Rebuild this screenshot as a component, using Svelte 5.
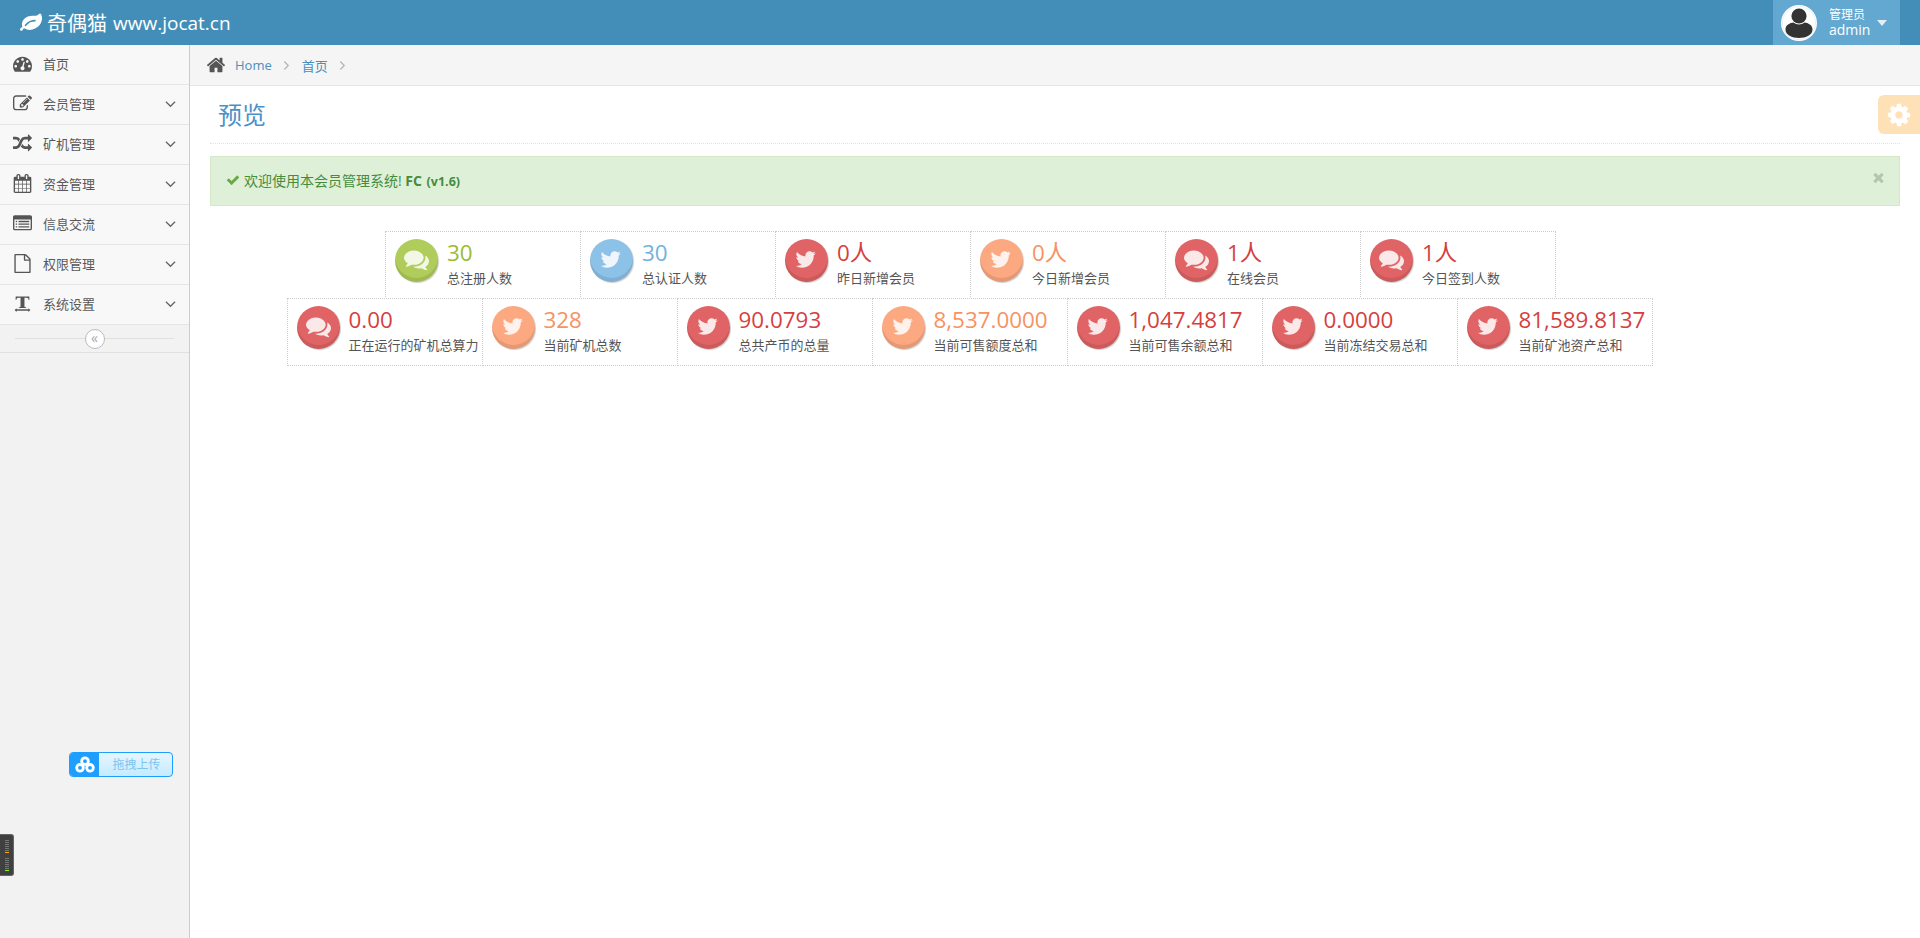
<script>
  const icons = {
    twitter: "M1620 408q-67 98-162 167 1 14 1 42 0 130-38 259.5t-115.5 248.5-184.5 210.5-258 146-323 54.5q-271 0-496-145 35 4 76 4 225 0 401-138-105-2-188-64.5t-114-159.5q33 5 61 5 43 0 85-11-112-23-185.5-111.5t-73.5-205.5v-4q68 38 146 41-66-44-105-115t-39-154q0-88 44-163 121 149 294.5 238.5t371.5 99.5q-8-38-8-74 0-134 94.5-228.5t228.5-94.5q140 0 236 102 109-21 200-76-35 110-132 166 85-9 170-46z",
    comments: "M1408 768q0 139-94 257t-256.5 186.5-353.5 68.5q-86 0-176-16-124 88-278 128-36 9-86 16h-3q-11 0-20.5-8t-11.5-21q-1-3-1-6.5t.5-6.5 2-6l2.5-5 3.5-5.5 4-5 4.5-5 4-4.5q5-6 23-25t26-29.5 22.5-29 25-38.5 20.5-44q-124-72-195-177t-71-224q0-139 94-257t256.5-186.5 353.5-68.5 353.5 68.5 256.5 186.5 94 257zm384 256q0 120-71 224.5t-195 176.5q10 24 20.5 44t25 38.5 22.5 29 26 29.5 23 25q1 1 4 4.5t4.5 5 4 5 3.5 5.5l2.5 5 2 6 .5 6.5-1 6.5q-3 14-13 22t-22 7q-50-7-86-16-154-40-278-128-90 16-176 16-271 0-472-132 58 4 88 4 161 0 309-45t264-129q125-92 192-212t67-254q0-77-23-152 129 71 204 178t75 230z",
    home: "M1472 992v480q0 26-19 45t-45 19h-384v-384h-256v384h-384q-26 0-45-19t-19-45v-480q0-1 .5-3t.5-3l575-474 575 474q1 2 1 6zm223-69l-62 74q-8 9-21 11h-3q-13 0-21-7l-692-577-692 577q-12 8-24 7-13-2-21-11l-62-74q-8-10-7-23.5t11-21.5l719-599q32-26 76-26t76 26l244 204v-195q0-14 9-23t23-9h192q14 0 23 9t9 23v408l219 182q10 8 11 21.5t-7 23.5z",
    cog: "M1152 896q0-106-75-181t-181-75-181 75-75 181 75 181 181 75 181-75 75-181zm512-109v222q0 12-8 23t-20 13l-185 28q-19 54-39 91 35 50 107 138 10 12 10 25t-9 23q-27 37-99 108t-94 71q-12 0-26-9l-138-108q-44 23-91 38-16 136-29 186-7 28-36 28h-222q-14 0-24.5-8.5t-11.5-21.5l-28-184q-49-16-90-37l-141 107q-10 9-25 9-14 0-25-11-126-114-165-168-7-10-7-23 0-12 8-23 15-21 51-66.5t54-70.5q-27-50-41-99l-183-27q-13-2-21-12.5t-8-23.5v-222q0-12 8-23t19-13l186-28q14-46 39-92-40-57-107-138-10-12-10-24 0-10 9-23 26-36 98.5-107.5t94.5-71.5q13 0 26 10l138 107q44-23 91-38 16-136 29-186 7-28 36-28h222q14 0 24.5 8.5t11.5 21.5l28 184q49 16 90 37l142-107q9-9 24-9 13 0 25 10 129 119 165 170 7 8 7 22 0 12-8 23-15 21-51 66.5t-54 70.5q26 50 41 98l183 28q13 2 21 12.5t8 23.5z",
    check: "M1671 566q0 40-28 68l-724 724-136 136q-28 28-68 28t-68-28l-136-136-362-362q-28-28-28-68t28-68l136-136q28-28 68-28t68 28l294 295 656-657q28-28 68-28t68 28l136 136q28 28 28 68z",
    times: "M1490 1322q0 40-28 68l-136 136q-28 28-68 28t-68-28l-294-294-294 294q-28 28-68 28t-68-28l-136-136q-28-28-28-68t28-68l294-294-294-294q-28-28-28-68t28-68l136-136q28-28 68-28t68 28l294 294 294-294q28-28 68-28t68 28l136 136q28 28 28 68t-28 68l-294 294 294 294q28 28 28 68z",
    leaf: "M1280 704q0-26-19-45t-45-19q-172 0-318 49.5t-259.5 134-235.5 219.5q-19 21-19 45 0 26 19 45t45 19q24 0 45-19 27-24 74-71t67-66q137-124 268.5-176t313.5-52q26 0 45-19t19-45zm512-198q0 95-20 193-46 224-184.5 383t-357.5 268q-214 108-438 108-148 0-286-47-15-5-88-42t-96-37q-16 0-39.5 32t-45 70-52.5 70-60 32q-30 0-51-11t-31-24-27-42q-2-4-6-11t-5.5-10-3-9.5-1.5-13.5q0-35 31-73.5t68-65.5 68-56 31-48q0-4-14-38t-16-44q-9-51-9-104 0-115 43.5-220t119-184.5 170.5-139 204-95.5q55-18 145-25.5t179.5-9 178.5-6 163.5-24 113.5-56.5l29.5-29.5 29.5-28 27-20 36.5-16 43.5-4.5q39 0 70.5 46t47.5 112 24 124 8 96z",
    random: "M666 481q-60 92-137 273-22-45-37-72.5t-40.5-63.5-51-56.5-63-35-81.5-14.5h-224q-14 0-23-9t-9-23v-192q0-14 9-23t23-9h224q250 0 410 225zm1126 799q0 14-9 23l-320 320q-9 9-23 9-13 0-22.5-9.5t-9.5-22.5v-192q-32 0-85 .5t-81 1-73-1-71-5-64-10.5-63-18.5-58-28.5-59-40-55-53.5-56-69.5q59-93 136-273 22 45 37 72.5t40.5 63.5 51 56.5 63 35 81.5 14.5h256v-192q0-14 9-23t23-9q12 0 24 10l319 319q9 9 9 23zm0-896q0 14-9 23l-320 320q-9 9-23 9-13 0-22.5-9.5t-9.5-22.5v-192h-256q-48 0-87 15t-69 45-51 61.5-45 77.5q-32 62-78 171-29 66-49.5 111t-54 105-64 100-74 83-90 68.5-106.5 42-128 16.5h-224q-14 0-23-9t-9-23v-192q0-14 9-23t23-9h224q48 0 87-15t69-45 51-61.5 45-77.5q32-62 78-171 29-66 49.5-111t54-105 64-100 74-83 90-68.5 106.5-42 128-16.5h256v-192q0-14 9-23t23-9q12 0 24 10l319 319q9 9 9 23z",
    calendar: "M192 1664h288v-288h-288v288zm352 0h320v-288h-320v288zm-352-352h288v-320h-288v320zm352 0h320v-320h-320v320zm-352-384h288v-288h-288v288zm736 736h320v-288h-320v288zm-384-736h320v-288h-320v288zm768 736h288v-288h-288v288zm-384-352h320v-320h-320v320zm-352-864v-288q0-13-9.5-22.5t-22.5-9.5h-64q-13 0-22.5 9.5t-9.5 22.5v288q0 13 9.5 22.5t22.5 9.5h64q13 0 22.5-9.5t9.5-22.5zm736 864h288v-320h-288v320zm-384-384h320v-288h-320v288zm384 0h288v-288h-288v288zm32-480v-288q0-13-9.5-22.5t-22.5-9.5h-64q-13 0-22.5 9.5t-9.5 22.5v288q0 13 9.5 22.5t22.5 9.5h64q13 0 22.5-9.5t9.5-22.5zm384-64v1280q0 52-38 90t-90 38h-1408q-52 0-90-38t-38-90v-1280q0-52 38-90t90-38h128v-96q0-66 47-113t113-47h64q66 0 113 47t47 113v96h384v-96q0-66 47-113t113-47h64q66 0 113 47t47 113v96h128q52 0 90 38t38 90z",
    edit: "M888 1184l116-116-152-152-116 116v56h96v96h56zm440-720q-16-16-33 1l-350 350q-17 17-1 33t33-1l350-350q17-17 1-33zm80 594v190q0 119-84.5 203.5t-203.5 84.5h-832q-119 0-203.5-84.5t-84.5-203.5v-832q0-119 84.5-203.5t203.5-84.5h832q63 0 117 25 15 7 18 23 3 17-9 29l-49 49q-14 14-32 8-23-6-45-6h-832q-66 0-113 47t-47 113v832q0 66 47 113t113 47h832q66 0 113-47t47-113v-126q0-13 9-22l64-64q15-15 35-7t20 29zm-96-738l288 288-672 672h-288v-288zm444 132l-92 92-288-288 92-92q28-28 68-28t68 28l152 152q28 28 28 68t-28 68z",
    listalt: "M384 1184v64q0 13-9.5 22.5t-22.5 9.5h-64q-13 0-22.5-9.5t-9.5-22.5v-64q0-13 9.5-22.5t22.5-9.5h64q13 0 22.5 9.5t9.5 22.5zm0-256v64q0 13-9.5 22.5t-22.5 9.5h-64q-13 0-22.5-9.5t-9.5-22.5v-64q0-13 9.5-22.5t22.5-9.5h64q13 0 22.5 9.5t9.5 22.5zm0-256v64q0 13-9.5 22.5t-22.5 9.5h-64q-13 0-22.5-9.5t-9.5-22.5v-64q0-13 9.5-22.5t22.5-9.5h64q13 0 22.5 9.5t9.5 22.5zm1152 512v64q0 13-9.5 22.5t-22.5 9.5h-960q-13 0-22.5-9.5t-9.5-22.5v-64q0-13 9.5-22.5t22.5-9.5h960q13 0 22.5 9.5t9.5 22.5zm0-256v64q0 13-9.5 22.5t-22.5 9.5h-960q-13 0-22.5-9.5t-9.5-22.5v-64q0-13 9.5-22.5t22.5-9.5h960q13 0 22.5 9.5t9.5 22.5zm0-256v64q0 13-9.5 22.5t-22.5 9.5h-960q-13 0-22.5-9.5t-9.5-22.5v-64q0-13 9.5-22.5t22.5-9.5h960q13 0 22.5 9.5t9.5 22.5zm128 704v-832q0-13-9.5-22.5t-22.5-9.5h-1472q-13 0-22.5 9.5t-9.5 22.5v832q0 13 9.5 22.5t22.5 9.5h1472q13 0 22.5-9.5t9.5-22.5zm128-1088v1088q0 66-47 113t-113 47h-1472q-66 0-113-47t-47-113v-1088q0-66 47-113t113-47h1472q66 0 113 47t47 113z",
    file: "M1596 380q28 28 48 76t20 88v1152q0 40-28 68t-68 28h-1344q-40 0-68-28t-28-68v-1600q0-40 28-68t68-28h896q40 0 88 20t76 48zm-444-244v376h376q-10-29-22-41l-313-313q-12-12-41-22zm384 1528v-1024h-416q-40 0-68-28t-28-68v-416h-768v1536h1280z",
    dashboard: "M384 1152q0-53-37.5-90.5t-90.5-37.5-90.5 37.5-37.5 90.5 37.5 90.5 90.5 37.5 90.5-37.5 37.5-90.5zm192-448q0-53-37.5-90.5t-90.5-37.5-90.5 37.5-37.5 90.5 37.5 90.5 90.5 37.5 90.5-37.5 37.5-90.5zm428 481l101-382q6-26-7.5-48.5t-38.5-29.5-48 6.5-30 39.5l-101 382q-60 5-107 43.5t-63 98.5q-20 77 20 146t117 89 146-20 89-117q16-60-6-117t-72-91zm660-33q0-53-37.5-90.5t-90.5-37.5-90.5 37.5-37.5 90.5 37.5 90.5 90.5 37.5 90.5-37.5 37.5-90.5zm-640-640q0-53-37.5-90.5t-90.5-37.5-90.5 37.5-37.5 90.5 37.5 90.5 90.5 37.5 90.5-37.5 37.5-90.5zm448 192q0-53-37.5-90.5t-90.5-37.5-90.5 37.5-37.5 90.5 37.5 90.5 90.5 37.5 90.5-37.5 37.5-90.5zm320 448q0 261-141 483-19 29-54 29h-1402q-35 0-54-29-141-221-141-483 0-182 71-348t191-286 286-191 348-71 348 71 286 191 191 286 71 348z",
    textwidth: "M250 230h1292v330h-60q-20-130-60-170t-150-40h-190v800q0 60 30 75t130 25v60h-692v-60q100-10 130-25t30-75v-800h-190q-110 0-150 40t-60 170h-60zM340 1450h1112v-110l190 180-190 180v-110h-1112v110l-190-180 190-180z"
  };

  const menu = [
    { label: "首页", icon: "dashboard" },
    { label: "会员管理", icon: "edit", arrow: true },
    { label: "矿机管理", icon: "random", arrow: true },
    { label: "资金管理", icon: "calendar", arrow: true },
    { label: "信息交流", icon: "listalt", arrow: true },
    { label: "权限管理", icon: "file", arrow: true },
    { label: "系统设置", icon: "textwidth", arrow: true }
  ];

  const rowOne = [
    { value: "30", label: "总注册人数", color: "green", icon: "comments" },
    { value: "30", label: "总认证人数", color: "blue", icon: "twitter" },
    { value: "0人", label: "昨日新增会员", color: "red", icon: "twitter" },
    { value: "0人", label: "今日新增会员", color: "orange", icon: "twitter" },
    { value: "1人", label: "在线会员", color: "red", icon: "comments" },
    { value: "1人", label: "今日签到人数", color: "red", icon: "comments" }
  ];

  const rowTwo = [
    { value: "0.00", label: "正在运行的矿机总算力", color: "red", icon: "comments" },
    { value: "328", label: "当前矿机总数", color: "orange", icon: "twitter" },
    { value: "90.0793", label: "总共产币的总量", color: "red", icon: "twitter" },
    { value: "8,537.0000", label: "当前可售额度总和", color: "orange", icon: "twitter" },
    { value: "1,047.4817", label: "当前可售余额总和", color: "red", icon: "twitter" },
    { value: "0.0000", label: "当前冻结交易总和", color: "red", icon: "twitter" },
    { value: "81,589.8137", label: "当前矿池资产总和", color: "red", icon: "twitter" }
  ];
</script>

{#snippet fa(name, cls)}
  <svg class={cls} viewBox="0 0 1792 1792" fill="currentColor" aria-hidden="true"><path d={icons[name]} /></svg>
{/snippet}

{#snippet crumbSep()}
  <svg class="sep" viewBox="0 0 8 12" aria-hidden="true"><path d="M1.5 1.5L6 6l-4.5 4.5" fill="none" stroke="#b2b6bf" stroke-width="1.5" /></svg>
{/snippet}

{#snippet infobox(item)}
  <div class="infobox {item.color}">
    <div class="circle">
      {@render fa(item.icon, item.icon === "comments" ? "glyph-comments" : "glyph-twitter")}
    </div>
    <div class="info">
      <div class="num">{item.value}</div>
      <div class="cap">{item.label}</div>
    </div>
  </div>
{/snippet}

<div class="page">
  <header class="navbar">
    <div class="brand">
      {@render fa("leaf", "brand-icon")}
      <span class="brand-cn">奇偶猫</span>
      <span class="brand-url">www.jocat.cn</span>
    </div>
    <div class="user">
      <svg class="avatar" viewBox="0 0 36 36" aria-hidden="true">
        <circle cx="18" cy="18" r="18" fill="#fff" />
        <circle cx="18" cy="18" r="16.6" fill="#fff" stroke="#dfe6ea" stroke-width="0.6" />
        <circle cx="18" cy="11" r="7.6" fill="#333" />
        <path d="M4.5 24.5C4.5 20 9 18 12.5 17.6c3 2.6 8 2.6 11 0C27 18 31.5 20 31.5 24.5 31.5 30 25 33 18 33S4.5 30 4.5 24.5z" fill="#333" />
      </svg>
      <div class="user-text">
        <div>管理员</div>
        <div class="user-name">admin</div>
      </div>
      <span class="caret"></span>
    </div>
  </header>

  <div class="body">
    <aside class="sidebar">
      <ul class="nav">
        {#each menu as item}
          <li>
            <span class="nav-icon">{@render fa(item.icon, "nav-svg")}</span>
            <span class="nav-label">{item.label}</span>
            {#if item.arrow}
              <svg class="chev" viewBox="0 0 12 8" aria-hidden="true"><path d="M1 1.5l5 5 5-5" fill="none" stroke="#666" stroke-width="1.4" /></svg>
            {/if}
          </li>
        {/each}
      </ul>
      <div class="collapse">
        <span class="collapse-btn">«</span>
      </div>
    </aside>

    <main class="main">
      <div class="breadcrumbs">
        {@render fa("home", "home-icon")}
        <span class="crumb">Home</span>
        {@render crumbSep()}
        <span class="crumb">首页</span>
        {@render crumbSep()}
      </div>

      <div class="content">
        <h1 class="page-title">预览</h1>

        <div class="alert">
          {@render fa("check", "check-icon")}
          <span class="alert-text">欢迎使用本会员管理系统! <strong class="fc">FC</strong> <small class="ver">(v1.6)</small></span>
          {@render fa("times", "close-icon")}
        </div>

        <div class="stats">
          <div class="stat-row first">
            {#each rowOne as item}
              {@render infobox(item)}
            {/each}
          </div>
          <div class="stat-row">
            {#each rowTwo as item}
              {@render infobox(item)}
            {/each}
          </div>
        </div>
      </div>
    </main>
  </div>

  <div class="settings-tab">{@render fa("cog", "cog-icon")}</div>

  <div class="upload">
    <span class="upload-logo">
      <svg viewBox="0 0 24 20" width="20" height="17" aria-hidden="true">
        <g fill="none" stroke="#fff" stroke-width="3.4"><circle cx="12" cy="6" r="4" /><circle cx="6" cy="14" r="4" /><circle cx="18" cy="14" r="4" /></g>
      </svg>
    </span>
    <span class="upload-text">拖拽上传</span>
  </div>

  <div class="meter">
    <div class="ticks"></div>
    <div class="led amber"></div>
    <div class="ticks"></div>
    <div class="led lime"></div>
  </div>
</div>

<style>
  :global(body) {
    margin: 0;
    background: #fff;
  }

  .page {
    position: relative;
    width: 1920px;
    height: 938px;
    overflow: hidden;
    font-family: "Open Sans", "Noto Sans CJK SC", sans-serif;
    font-size: 13px;
    color: #393939;
  }

  .navbar {
    display: flex;
    align-items: center;
    justify-content: space-between;
    height: 45px;
    padding: 0 20px;
    background: #438eb9;
    color: #fff;
  }

  .brand {
    display: flex;
    align-items: center;
    gap: 5px;
  }

  .brand-icon {
    width: 22px;
    height: 22px;
  }

  .brand-cn {
    font-size: 20px;
    margin-right: 1px;
  }

  .brand-url {
    font-size: 19px;
  }

  .user {
    display: flex;
    align-items: center;
    width: 127px;
    height: 45px;
    box-sizing: border-box;
    padding-left: 8px;
    background: #62a8d1;
  }

  .avatar {
    width: 36px;
    height: 36px;
  }

  .user-text {
    margin-left: 12px;
    font-size: 12px;
    line-height: 15px;
  }

  .user-name {
    font-size: 14px;
    line-height: 16px;
  }

  .caret {
    margin-left: 7px;
    border-top: 6px solid #e6eef3;
    border-left: 5px solid transparent;
    border-right: 5px solid transparent;
  }

  .body {
    display: flex;
    height: 893px;
  }

  .sidebar {
    flex: 0 0 auto;
    box-sizing: border-box;
    width: 190px;
    background: #f2f2f2;
    border-right: 1px solid #ccc;
  }

  .nav {
    margin: 0;
    padding: 0;
    list-style: none;
  }

  .nav li {
    display: flex;
    align-items: center;
    box-sizing: border-box;
    height: 40px;
    padding: 0 0 2px 12px;
    background: #f8f8f8;
    border-bottom: 1px solid #e5e5e5;
    color: #585858;
  }

  .nav-icon {
    display: flex;
    justify-content: center;
    width: 20px;
    margin-right: 11px;
  }

  .nav-svg {
    width: 19px;
    height: 19px;
    color: #555;
  }

  .nav-label {
    flex: 1;
  }

  .chev {
    width: 11px;
    height: 8px;
    margin-right: 13px;
  }

  .collapse {
    position: relative;
    display: flex;
    align-items: center;
    justify-content: center;
    height: 27px;
    border-bottom: 1px solid #e0e0e0;
  }

  .collapse::before {
    content: "";
    position: absolute;
    left: 15px;
    right: 15px;
    top: 13px;
    border-top: 1px solid #e0e0e0;
  }

  .collapse-btn {
    position: relative;
    box-sizing: border-box;
    width: 20px;
    height: 20px;
    border: 1px solid #bbb;
    border-radius: 50%;
    background: #fff;
    color: #aaa;
    font-size: 14px;
    line-height: 15px;
    text-align: center;
  }

  .main {
    flex: 1;
    min-width: 0;
  }

  .breadcrumbs {
    display: flex;
    align-items: center;
    box-sizing: border-box;
    height: 41px;
    padding-left: 16px;
    background: #f5f5f5;
    border-bottom: 1px solid #e5e5e5;
  }

  .home-icon {
    width: 20px;
    height: 20px;
    margin-right: 9px;
    color: #555;
  }

  .crumb {
    color: #4c8fbd;
  }

  .sep {
    width: 7px;
    height: 11px;
    margin: 1px 12px 0 11px;
  }

  .content {
    padding: 0 20px;
  }

  .page-title {
    box-sizing: border-box;
    height: 58px;
    margin: 0;
    padding: 12px 8px 0;
    border-bottom: 1px dotted #e2e2e2;
    color: #4a92c6;
    font-size: 24px;
    font-weight: 400;
    line-height: 34px;
  }

  .alert {
    display: flex;
    align-items: center;
    gap: 4px;
    box-sizing: border-box;
    height: 50px;
    margin-top: 12px;
    padding: 0 15px 2px;
    background: #dff0d8;
    border: 1px solid #d6e9c6;
    color: #478c3c;
    font-size: 14px;
  }

  .alert-text {
    flex: 1;
  }

  .fc {
    font-weight: 700;
  }

  .ver {
    font-size: 12.5px;
    font-weight: 700;
    margin-left: 1px;
  }

  .check-icon {
    width: 14px;
    height: 14px;
    color: #69aa46;
  }

  .close-icon {
    width: 15px;
    height: 15px;
    margin-top: -6px;
    margin-right: -2px;
    color: #b6c5b2;
  }

  .stats {
    width: 1520px;
    margin-top: 26px;
  }

  .stat-row {
    display: flex;
    justify-content: center;
    margin-top: -1px;
  }

  .stat-row.first {
    padding-left: 2px;
  }

  .infobox {
    display: flex;
    flex: 0 0 auto;
    box-sizing: border-box;
    width: 196px;
    height: 68px;
    margin-left: -1px;
    padding: 7px 0 0 9px;
    border: 1px dotted #ccc;
    background: #fff;
  }

  .circle {
    display: flex;
    align-items: center;
    justify-content: center;
    flex: 0 0 auto;
    width: 43px;
    height: 43px;
    border-radius: 50%;
    box-shadow: inset 0 -4px 0 rgba(0, 0, 0, 0.09), 1px 1px 1px rgba(0, 0, 0, 0.2);
    color: rgba(255, 255, 255, 0.85);
  }

  .glyph-comments {
    width: 25px;
    height: 25px;
    margin-top: -2px;
  }

  .glyph-twitter {
    width: 23px;
    height: 23px;
    margin-top: -2px;
  }

  .info {
    margin: 1px 0 0 9px;
    white-space: nowrap;
  }

  .num {
    font-size: 22.4px;
    line-height: 26px;
    height: 29px;
  }

  .cap {
    color: #555;
    font-size: 13px;
    line-height: 18px;
  }

  .green .num { color: #9abc32; }
  .green .circle { background: #b0cc5a; }
  .blue .num { color: #6fb3e0; }
  .blue .circle { background: #8cc1e8; }
  .red .num { color: #d53f40; }
  .red .circle { background: #e06365; }
  .orange .num { color: #f79263; }
  .orange .circle { background: #fca880; }

  .settings-tab {
    position: absolute;
    top: 95px;
    right: 0;
    display: flex;
    align-items: center;
    justify-content: center;
    width: 42px;
    height: 39px;
    border-radius: 6px 0 0 6px;
    background: #ffe1b8;
    color: #fff;
  }

  .cog-icon {
    width: 26px;
    height: 26px;
  }

  .upload {
    position: absolute;
    left: 69px;
    top: 752px;
    display: flex;
    box-sizing: border-box;
    width: 104px;
    height: 25px;
    overflow: hidden;
    border: 1px solid #1e9fff;
    border-radius: 4px;
    background: linear-gradient(#e6f6ff, #c5ebff);
  }

  .upload-logo {
    display: flex;
    align-items: center;
    justify-content: center;
    width: 29px;
    background: #1e9fff;
  }

  .upload-text {
    flex: 1;
    padding-left: 2px;
    color: #7cc4f0;
    font-size: 12px;
    line-height: 23px;
    text-align: center;
  }

  .meter {
    position: absolute;
    left: 0;
    top: 834px;
    box-sizing: border-box;
    width: 14px;
    height: 42px;
    padding: 5px 0 0 5px;
    border: 1px solid #666;
    border-left: 0;
    border-radius: 0 3px 3px 0;
    background: #404040;
  }

  .ticks {
    width: 4px;
    height: 12px;
    background: repeating-linear-gradient(#777 0 1px, transparent 1px 2px);
  }

  .led {
    width: 4px;
    height: 1px;
    margin-bottom: 5px;
  }

  .amber {
    background: #ffa500;
  }

  .lime {
    background: #7fff00;
  }
</style>
